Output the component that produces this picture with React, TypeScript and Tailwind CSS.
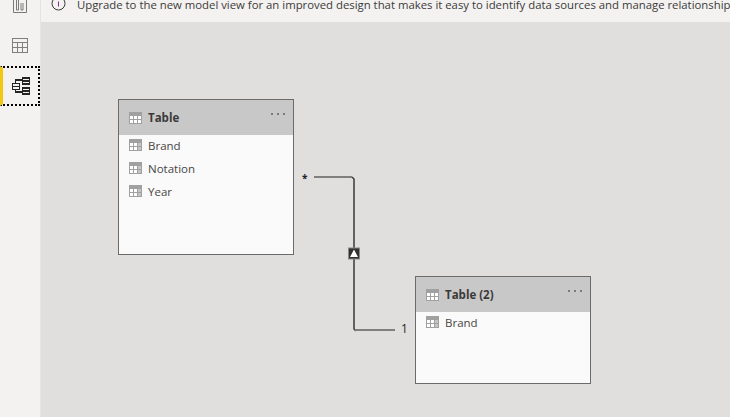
import React from 'react';

const TableIcon = ({ light }: { light?: boolean }) => (
  <svg width="13" height="12" viewBox="0 0 13 12" shapeRendering="crispEdges" className="shrink-0">
    <rect x="0" y="0" width="13" height="12" fill="#a0a0a0" />
    {[0, 1, 2].map((c) =>
      [0, 1].map((r) => (
        <rect
          key={`${c}-${r}`}
          x={1 + c * 4}
          y={4 + r * 4}
          width="3"
          height="3"
          fill={light || c < 2 ? '#ffffff' : '#c4c4c4'}
        />
      ))
    )}
  </svg>
);

const ModelTable = ({
  name,
  fields,
  className,
}: {
  name: string;
  fields: string[];
  className: string;
}) => (
  <div className={`absolute w-[176px] border border-[#6b6b6b] bg-[#fafafa] ${className}`}>
    <div className="relative flex h-[35px] items-center gap-[6px] bg-[#c8c8c8] pl-[10px]">
      <TableIcon light />
      <span className="text-[11.5px] font-bold text-[#3b3a39]">{name}</span>
      <div className="absolute right-[8px] top-[13px] flex gap-[4px]">
        <span className="h-[2px] w-[2px] bg-[#7a7a7a]" />
        <span className="h-[2px] w-[2px] bg-[#7a7a7a]" />
        <span className="h-[2px] w-[2px] bg-[#7a7a7a]" />
      </div>
    </div>
    <div className="flex flex-col gap-[5px] pl-[10px] pt-[1px]">
      {fields.map((field) => (
        <div key={field} className="flex h-[18px] items-center gap-[6px]">
          <TableIcon />
          <span className="pt-[2px] text-[11.5px] text-[#484644]">{field}</span>
        </div>
      ))}
    </div>
  </div>
);

export default function App() {
  return (
    <div className="flex h-[417px] w-[730px] overflow-hidden bg-[#e1dfdd] font-['Open_Sans',sans-serif]">
      <aside className="flex w-[40px] shrink-0 flex-col bg-[#f3f2f1]">
        <div className="flex h-[13px] items-end justify-center">
          <svg width="14" height="13" viewBox="0 0 14 13" fill="none" stroke="#7a7a7a" strokeWidth="1">
            <path d="M.5 0v12.5h13V0M3.5 0v10h2V0M8 3v7h2V3" />
          </svg>
        </div>
        <div className="flex h-[53px] items-center justify-center pt-[11px]">
          <svg width="16" height="15" viewBox="0 0 16 15" fill="none" stroke="#7f7f7f" strokeWidth="1" shapeRendering="crispEdges">
            <path d="M.5.5h15v14H.5zM.5 4.5h15M.5 9.5h15M5.5 4.5v10M10.5 4.5v10" />
          </svg>
        </div>
        <div className="flex h-[40px] items-center justify-center border-y-2 border-r-2 border-dotted border-y-black border-r-black border-l-[3px] border-l-[#f2c811] [border-left-style:solid]">
          <svg width="18" height="18" viewBox="0 0 18 18" fill="none" stroke="#252423" strokeWidth="1.2" shapeRendering="crispEdges">
            <path d="M.5 6.5h7v6h-7zM10.5 1h7v6h-7zM10.5 11h7v6h-7zM3.5 6.5V3h7M3.5 12.5V15h7M10.5 4h7M10.5 14h7M.5 9.5h7" />
          </svg>
        </div>
      </aside>
      <main className="relative min-w-0 flex-1 border-l border-[#e6e4e2]">
        <div className="flex h-[22px] items-start gap-[11px] overflow-hidden bg-[#f3f2f1] pl-[10px]">
          <svg width="15" height="15" viewBox="0 0 15 15" fill="none" className="mt-[-4px] shrink-0">
            <circle cx="7.5" cy="7.5" r="6.5" stroke="#3b3a39" />
            <path d="M7.5 2.5v1M7.5 5.5v5" stroke="#7a2f8f" />
          </svg>
          <span className="mt-[-4px] whitespace-nowrap text-[11.35px] leading-[17px] text-[#3b3a39]">
            Upgrade to the new model view for an improved design that makes it easy to identify data sources and manage relationships
          </span>
        </div>

        <ModelTable name="Table" fields={['Brand', 'Notation', 'Year']} className="left-[77px] top-[99px] h-[156px]" />
        <ModelTable name="Table (2)" fields={['Brand']} className="left-[374px] top-[276px] h-[108px]" />

        <svg width="110" height="165" viewBox="0 0 110 165" fill="none" className="absolute left-[259px] top-[170px]">
          <path d="M14 7h38" stroke="#7f7f7f" strokeWidth="2" />
          <path d="M52 7l2 2v150l2 2" stroke="#3b3a39" strokeWidth="1.5" />
          <path d="M55 160h40" stroke="#7f7f7f" strokeWidth="2" />
          <rect x="48.5" y="78" width="11" height="11" fill="#323130" stroke="#8a8886" />
          <path d="M54 79.5l4 7.5h-8z" fill="#ffffff" />
        </svg>
        <span className="absolute left-[261px] top-[171px] text-[10px] font-bold leading-[14px] text-[#252423]">*</span>
        <span className="absolute left-[360px] top-[321px] text-[12px] font-medium leading-[16px] text-[#252423]">1</span>
      </main>
    </div>
  );
}
